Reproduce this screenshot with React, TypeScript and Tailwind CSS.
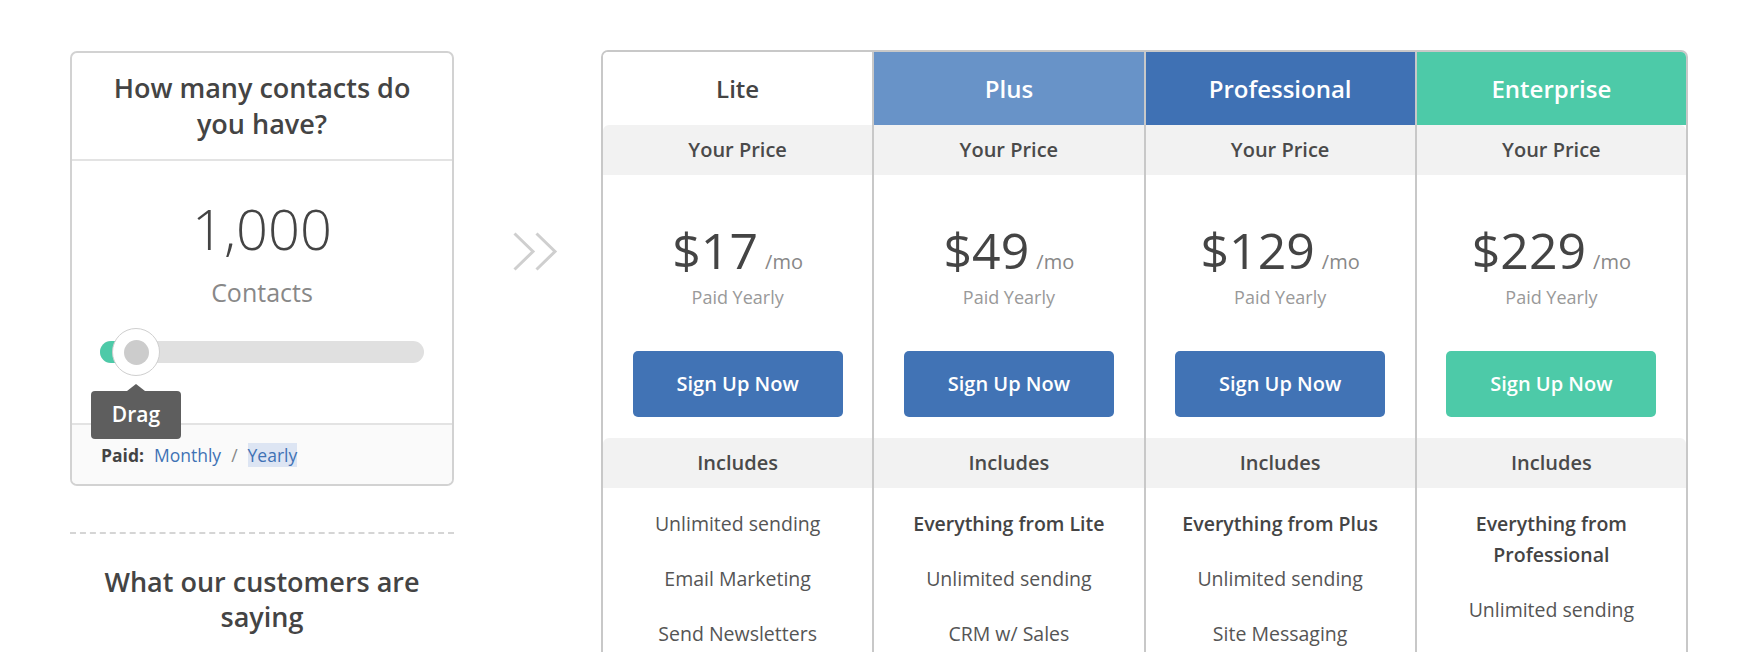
import React from "react";

type Feature = { t: string; b?: boolean };
type Plan = {
  name: string;
  headerCls: string;
  price: string;
  btnCls: string;
  rowCls: string;
  colCls: string;
  features: Feature[];
};

const plans: Plan[] = [
  {
    name: "Lite",
    headerCls: "bg-white text-[#444]",
    price: "$17",
    btnCls: "bg-[#4173b5]",
    rowCls: "rounded-tl-[6px]",
    colCls: "",
    features: [
      { t: "Unlimited sending" },
      { t: "Email Marketing" },
      { t: "Send Newsletters" },
      { t: "Marketing Automation" },
      { t: "Chat & Email Support" },
    ],
  },
  {
    name: "Plus",
    headerCls: "bg-[#6893c8] text-white",
    price: "$49",
    btnCls: "bg-[#4173b5]",
    rowCls: "",
    colCls: "border-l-2 border-[#c8c8c8]",
    features: [
      { t: "Everything from Lite", b: true },
      { t: "Unlimited sending" },
      { t: "CRM w/ Sales" },
      { t: "Automation" },
      { t: "Lead Scoring" },
    ],
  },
  {
    name: "Professional",
    headerCls: "bg-[#3f71b4] text-white",
    price: "$129",
    btnCls: "bg-[#4173b5]",
    rowCls: "",
    colCls: "border-l-2 border-[#c8c8c8]",
    features: [
      { t: "Everything from Plus", b: true },
      { t: "Unlimited sending" },
      { t: "Site Messaging" },
      { t: "Attribution" },
      { t: "Predictive Sending" },
    ],
  },
  {
    name: "Enterprise",
    headerCls: "bg-[#4dcaa8] text-white",
    price: "$229",
    btnCls: "bg-[#4dcaa8]",
    rowCls: "rounded-tr-[6px]",
    colCls: "border-l-2 border-[#c8c8c8]",
    features: [
      { t: "Everything from Professional", b: true },
      { t: "Unlimited sending" },
      { t: "Custom Reporting" },
      { t: "Custom Domain" },
    ],
  },
];

function PlanColumn({ p }: { p: Plan }) {
  return (
    <div className={`flex-1 min-w-0 flex flex-col ${p.colCls}`}>
      <div
        className={`h-[73px] flex items-center justify-center text-[24px] leading-[32px] font-semibold ${p.headerCls}`}
      >
        {p.name}
      </div>
      <div
        className={`h-[50px] bg-[#f2f2f2] flex items-center justify-center text-[20px] leading-[28px] font-semibold text-[#4a4a4a] ${p.rowCls}`}
      >
        Your Price
      </div>
      <div className="pt-[50px] flex flex-col items-center">
        <div className="flex items-baseline leading-[50px]">
          <span className="text-[50px] text-[#444]">{p.price}</span>
          <span className="ml-[7px] text-[20px] text-[#888]">/mo</span>
        </div>
        <div className="mt-[-2px] text-[18px] leading-[24px] text-[#999]">
          Paid Yearly
        </div>
        <button
          className={`mt-[42px] w-[210px] h-[66px] rounded-[5px] text-white text-[20px] font-semibold ${p.btnCls}`}
        >
          Sign Up Now
        </button>
      </div>
      <div
        className={`mt-[21px] h-[50px] bg-[#f2f2f2] flex items-center justify-center text-[20px] leading-[28px] font-semibold text-[#4a4a4a] ${p.rowCls}`}
      >
        Includes
      </div>
      <div className="pt-[20px] pb-[30px] px-[18px] flex flex-col gap-[24px] text-center text-[19.5px] leading-[31px]">
        {p.features.map((f) => (
          <div
            key={f.t}
            className={f.b ? "font-semibold text-[#444]" : "text-[#555]"}
          >
            {f.t}
          </div>
        ))}
      </div>
    </div>
  );
}

export default function App() {
  return (
    <div className="min-h-screen bg-white font-['Open_Sans',sans-serif] text-[#444]">
      <div className="flex items-start pl-[70px] pt-[50px]">
        {/* Left column */}
        <div className="w-[384px] shrink-0 flex flex-col">
          <div className="mt-[1px] border-2 border-[#d2d2d2] rounded-[7px] bg-white">
            <div className="border-b-2 border-[#e3e3e3] py-[17px] px-[36px] text-center text-[27px] leading-[36px] font-semibold text-[#444]">
              How many contacts do you have?
            </div>
            <div className="pt-[39px] pb-[60px] flex flex-col items-center">
              <div className="text-[56px] leading-[56px] font-light text-[#444]">
                1,000
              </div>
              <div className="mt-[21px] text-[25px] leading-[30px] text-[#888]">
                Contacts
              </div>
              <div className="mt-[34px] self-stretch mx-[28px] relative h-[22px] rounded-full bg-[#e0e0e0]">
                <div className="absolute left-0 top-0 h-full w-[36px] rounded-l-full bg-[#4dcaa8]" />
                <div className="absolute left-[12px] top-[-13px] w-[48px] h-[48px] rounded-full bg-white border border-[#cfcfcf] flex items-center justify-center">
                  <div className="w-[25px] h-[25px] rounded-full bg-[#cccccc]" />
                </div>
                <div className="absolute left-[-9px] top-[50px] z-10 w-[90px] h-[48px] rounded-[4px] bg-[#5e5e5e] flex items-center justify-center text-white text-[21px] font-semibold">
                  <div className="absolute top-[-7px] left-[36px] w-0 h-0 border-l-[9px] border-r-[9px] border-b-[7px] border-l-transparent border-r-transparent border-b-[#5e5e5e]" />
                  Drag
                </div>
              </div>
            </div>
            <div className="h-[61px] flex items-center pl-[29px] bg-[#fafafa] border-t-2 border-[#e3e3e3] rounded-b-[5px] text-[17.5px] leading-[24px]">
              <span className="font-bold text-[#444]">Paid:</span>
              <span className="ml-[10px] text-[#3f72b5]">Monthly</span>
              <span className="mx-[10px] text-[#888]">/</span>
              <span className="bg-[#dde5f3] text-[#3f72b5]">Yearly</span>
            </div>
          </div>
          <div className="mt-[46px] border-t-2 border-dashed border-[#d5d5d5]" />
          <div className="mt-[30px] px-[20px] text-center text-[27px] leading-[35px] font-semibold text-[#444]">
            What our customers are saying
          </div>
        </div>

        {/* Chevrons */}
        <div className="ml-[59px] mt-[182px] shrink-0">
          <svg width="45" height="39" viewBox="0 0 45 39" fill="none">
            <polyline
              points="1.5,1.5 20,19.5 1.5,37.5"
              stroke="#cfcfcf"
              strokeWidth="3"
            />
            <polyline
              points="23.5,1.5 42,19.5 23.5,37.5"
              stroke="#cfcfcf"
              strokeWidth="3"
            />
          </svg>
        </div>

        {/* Pricing table */}
        <div className="ml-[43px] w-[1087px] shrink-0 flex border-2 border-b-0 border-[#c8c8c8] rounded-t-[7px] overflow-hidden">
          {plans.map((p) => (
            <PlanColumn key={p.name} p={p} />
          ))}
        </div>
      </div>
    </div>
  );
}
